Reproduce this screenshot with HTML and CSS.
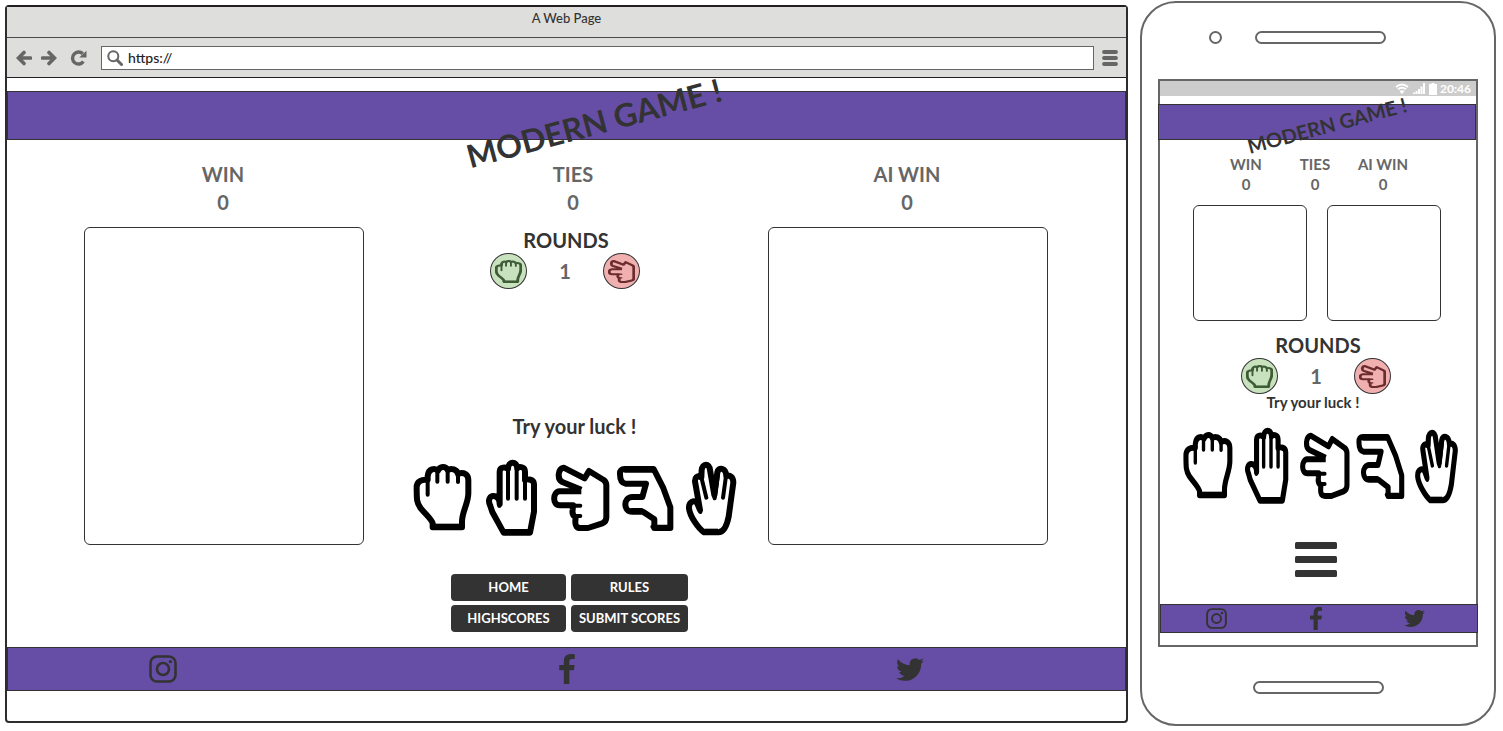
FILE: index.html
```html
<!DOCTYPE html>
<html lang="en">
<head>
<meta charset="utf-8">
<title>Modern Game</title>
<link rel="stylesheet" href="styles.css">
</head>
<body>
<svg class="defs" aria-hidden="true">
  <defs>
    <g id="rock" class="hand-lines">
      <path d="M98 382V370C95 358 82 348 62 325C50 308 50 300 50 262C50 243 65 238 83 240V228C85 205 105 203 114 212C120 198 137 198 143 210C153 203 172 208 174 222C190 215 205 222 205 240V280C205 310 186 335 186 365V382Z"/>
      <path class="thin" d="M83 228V284M112 212V245M143 210V245M174 222V246"/>
      <path d="M98 380H186"/>
    </g>
    <g id="paper" class="hand-lines">
      <path d="M311 398L277 336L270 315C262 298 272 286 282 288C295 290 299 305 299 312V215C299 200 318 200 324 207C324 182 351 182 352 205C358 198 375 200 375 215V240C382 236 402 238 402 252V335L390 398Z"/>
      <path class="thin" d="M298 290V318M324 207V296M350 205V296M375 215V296"/>
      <path d="M313 396H388"/>
    </g>
    <g id="scissors" class="hand-lines">
      <path d="M545 269L488 246C472 238 474 206 492 203L555 235L568 213L612 240Q620 246 620 256V352Q620 366 608 370L565 384H542Q526 384 527 364L528 352Q516 345 519 330L520 316H480C458 316 458 276 480 274H545"/>
      <path class="thin" d="M528 348H542M520 317H542"/>
    </g>
    <g id="lizard" class="hand-lines">
      <path d="M661 222Q660 207 675 207H762L790 262L812 322V384H764V358L730 335H698C670 335 670 292 698 291H728L739 251H678Q661 249 661 222Z"/>
      <path class="thin" d="M676 212H758M696 330H726M758 380H814" stroke-linecap="butt"/>
    </g>
    <g id="spock" class="hand-lines">
      <path d="M912 397C895 385 870 350 867 325C866 305 882 298 892 310L900 330L886 250C882 232 892 225 904 232L905 210C907 190 928 188 930 210L943 285L952 217C955 200 978 202 979 228C990 224 1000 232 1000 248L986 350C980 380 970 397 955 397Z"/>
      <path class="thin" d="M896 305L901 336M904 232L919 293M930 210L944 295L955 215M978 228L969 293"/>
      <path d="M914 395H954"/>
    </g>
    <g id="instagram">
      <rect x="1.5" y="1.5" width="25" height="25" rx="6.5" fill="none" stroke="currentColor" stroke-width="2.6"/>
      <circle cx="14" cy="14" r="6" fill="none" stroke="currentColor" stroke-width="2.6"/>
      <circle cx="21.4" cy="6.6" r="1.7" fill="currentColor"/>
    </g>
    <path id="facebook" fill="currentColor" d="M959 12v264H802q-86 0-116 36t-30 108v189h293l-39 296H656v759H350V905H95V609h255V391q0-186 104-288.5T731 0q147 0 228 12z"/>
    <path id="twitter" fill="currentColor" d="M1684 408q-67 98-162 167 1 14 1 42 0 130-38 259.500T1369.500 1125 1185 1335.500t-258 146-323 54.500q-271 0-496-145 35 4 78 4 225 0 401-138-105-2-188-64.500T285 1033q33 5 61 5 43 0 85-11-112-23-185.500-111.500T172 710v-4q68 38 146 41-66-44-105-115t-39-154q0-88 44-163 121 149 294.500 238.500T884 653q-8-38-8-74 0-134 94.500-228.500T1199 256q140 0 236 102 109-21 205-78-37 115-142 178 93-10 186-50z"/>
  </defs>
</svg>

<main class="showcase">
  <section class="browser">
    <div class="titlebar">A Web Page</div>
    <div class="toolbar">
      <button class="tool" aria-label="Back"><svg width="16" height="16" viewBox="0 0 16 16"><path d="M14.500 8H3M8 2.500L2.500 8L8 13.500" fill="none" stroke="currentColor" stroke-width="3.600" stroke-linecap="round"/></svg></button>
      <button class="tool" aria-label="Forward"><svg width="16" height="16" viewBox="0 0 16 16"><path d="M1.500 8H13M8 2.500L13.500 8L8 13.500" fill="none" stroke="currentColor" stroke-width="3.600" stroke-linecap="round"/></svg></button>
      <button class="tool reload" aria-label="Reload"><svg width="18" height="16" viewBox="0 0 18 16"><path d="M13.400 11.600A6 6 0 1 1 12.800 3.800" fill="none" stroke="currentColor" stroke-width="3.400"/><path d="M16.500 .8V7.600H9.200Z" fill="currentColor"/></svg></button>
      <label class="address">
        <svg width="16" height="16" viewBox="0 0 16 16"><circle cx="6.300" cy="6.300" r="5" fill="none" stroke="currentColor" stroke-width="2"/><path d="M10 10L14.500 14.500" stroke="currentColor" stroke-width="3" stroke-linecap="round"/></svg>
        <input type="text" value="https://" aria-label="Address">
      </label>
      <button class="tool" aria-label="Browser menu"><svg width="16" height="16" viewBox="0 0 16 16"><path d="M2 2H14M2 8H14M2 14H14" stroke="currentColor" stroke-width="3.800" stroke-linecap="round"/></svg></button>
    </div>

    <div class="page">
      <header class="band"><h1 class="title">MODERN GAME !</h1></header>
      <dl class="scores">
        <div><dt>WIN</dt><dd>0</dd></div>
        <div><dt>TIES</dt><dd>0</dd></div>
        <div><dt>AI WIN</dt><dd>0</dd></div>
      </dl>
      <div class="board">
        <div class="card"></div>
        <div class="middle">
          <div class="rounds">
            <h2>ROUNDS</h2>
            <div class="round-row">
              <span class="pick pick-green"><svg viewBox="42 193 171 199" preserveAspectRatio="none"><use href="#rock"/></svg></span>
              <span class="round-number">1</span>
              <span class="pick pick-red"><svg viewBox="456 194 172 198" preserveAspectRatio="none"><use href="#scissors"/></svg></span>
            </div>
          </div>
          <div class="play">
            <p class="prompt">Try your luck !</p>
            <div class="hands">
              <button class="hand" style="flex-grow:201" aria-label="Rock"><svg viewBox="36 174 201 240" preserveAspectRatio="none"><use href="#rock"/></svg></button>
              <button class="hand" style="flex-grow:196" aria-label="Paper"><svg viewBox="237 174 196 240" preserveAspectRatio="none"><use href="#paper"/></svg></button>
              <button class="hand" style="flex-grow:207" aria-label="Scissors"><svg viewBox="433 174 207 240" preserveAspectRatio="none"><use href="#scissors"/></svg></button>
              <button class="hand" style="flex-grow:200" aria-label="Lizard"><svg viewBox="640 174 200 240" preserveAspectRatio="none"><use href="#lizard"/></svg></button>
              <button class="hand" style="flex-grow:174" aria-label="Spock"><svg viewBox="840 174 174 240" preserveAspectRatio="none"><use href="#spock"/></svg></button>
            </div>
          </div>
        </div>
        <div class="card"></div>
      </div>
      <nav class="menu">
        <button>HOME</button>
        <button>RULES</button>
        <button>HIGHSCORES</button>
        <button>SUBMIT SCORES</button>
      </nav>
      <footer class="band social">
        <a href="#instagram" aria-label="Instagram"><svg class="ig" viewBox="0 0 28 28"><use href="#instagram"/></svg></a>
        <a href="#facebook" aria-label="Facebook"><svg class="fb" viewBox="95 0 864 1664"><use href="#facebook"/></svg></a>
        <a href="#twitter" aria-label="Twitter"><svg class="tw" viewBox="108 256 1576 1280"><use href="#twitter"/></svg></a>
      </footer>
    </div>
  </section>

  <section class="phone">
    <div class="phone-top"><span class="camera"></span><span class="bar"></span></div>
    <div class="screen">
      <div class="status">
        <svg width="14" height="11" viewBox="0 0 14 11"><path d="M1 4Q7 -1 13 4M3 6.300Q7 3 11 6.300" fill="none" stroke="currentColor" stroke-width="1.900"/><path d="M4.500 8.200Q7 6.300 9.500 8.200L7 11Z" fill="currentColor"/></svg>
        <svg width="14" height="11" viewBox="0 0 14 11"><path d="M2 11V9.500M4.500 11V8M7 11V6M9.500 11V3.500M12 11V0" stroke="currentColor" stroke-width="2"/></svg>
        <svg class="battery" width="8" height="12" viewBox="0 0 8 12"><path d="M2.500 0H5.500V1H8V12H0V1H2.500Z" fill="currentColor"/></svg>
        <span>20:46</span>
      </div>
      <header class="band"><h1 class="title">MODERN GAME !</h1></header>
      <dl class="scores">
        <div><dt>WIN</dt><dd>0</dd></div>
        <div><dt>TIES</dt><dd>0</dd></div>
        <div><dt>AI WIN</dt><dd>0</dd></div>
      </dl>
      <div class="cards"><div class="card"></div><div class="card"></div></div>
      <div class="rounds">
        <h2>ROUNDS</h2>
        <div class="round-row">
          <span class="pick pick-green"><svg viewBox="42 193 171 199" preserveAspectRatio="none"><use href="#rock"/></svg></span>
          <span class="round-number">1</span>
          <span class="pick pick-red"><svg viewBox="456 194 172 198" preserveAspectRatio="none"><use href="#scissors"/></svg></span>
        </div>
      </div>
      <p class="prompt">Try your luck !</p>
      <div class="hands">
        <button class="hand" style="flex-grow:201" aria-label="Rock"><svg viewBox="36 174 201 240" preserveAspectRatio="none"><use href="#rock"/></svg></button>
        <button class="hand" style="flex-grow:196" aria-label="Paper"><svg viewBox="237 174 196 240" preserveAspectRatio="none"><use href="#paper"/></svg></button>
        <button class="hand" style="flex-grow:207" aria-label="Scissors"><svg viewBox="433 174 207 240" preserveAspectRatio="none"><use href="#scissors"/></svg></button>
        <button class="hand" style="flex-grow:200" aria-label="Lizard"><svg viewBox="640 174 200 240" preserveAspectRatio="none"><use href="#lizard"/></svg></button>
        <button class="hand" style="flex-grow:174" aria-label="Spock"><svg viewBox="840 174 174 240" preserveAspectRatio="none"><use href="#spock"/></svg></button>
      </div>
      <button class="burger" aria-label="Menu"><svg width="42" height="35" viewBox="0 0 42 35"><g fill="currentColor"><rect width="42" height="7" rx="1.500"/><rect y="14" width="42" height="7" rx="1.500"/><rect y="28" width="42" height="7" rx="1.500"/></g></svg></button>
      <footer class="band social">
        <a href="#instagram" aria-label="Instagram"><svg class="ig" viewBox="0 0 28 28"><use href="#instagram"/></svg></a>
        <a href="#facebook" aria-label="Facebook"><svg class="fb" viewBox="95 0 864 1664"><use href="#facebook"/></svg></a>
        <a href="#twitter" aria-label="Twitter"><svg class="tw" viewBox="108 256 1576 1280"><use href="#twitter"/></svg></a>
      </footer>
    </div>
    <div class="phone-bottom"><span class="bar"></span></div>
  </section>
</main>
</body>
</html>
```
FILE: styles.css
```css
* { box-sizing: border-box; }

body {
  margin: 0;
  background: #fff;
  color: #333;
  font-family: Lato, "Open Sans", sans-serif;
}

h1, h2, p, dl, dd { margin: 0; }
svg { display: block; }
a { color: inherit; }

button {
  margin: 0;
  padding: 0;
  border: 0;
  background: none;
  color: inherit;
  font: inherit;
  cursor: pointer;
}

.defs { position: absolute; width: 0; height: 0; }

.showcase {
  display: grid;
  grid-template-columns: 1123fr 356fr;
  gap: 12px;
  align-items: start;
  padding: 1px 7px 4px 5px;
}

/* Browser window */
.browser {
  margin-top: 4px;
  border: 2px solid #2d2d2f;
  border-top-color: #231f20;
  border-radius: 4px;
}

.titlebar {
  height: 31px;
  border-bottom: 1px solid #4a4a4a;
  background: #dededc;
  font-size: 13px;
  font-weight: 500;
  line-height: 23px;
  text-align: center;
}

.toolbar {
  display: flex;
  align-items: center;
  height: 40px;
  padding: 0 8px 0 9px;
  border-bottom: 1px solid #231f20;
  background: #dededc;
  color: #666;
}

.tool + .tool { margin-left: 9px; }
.tool.reload { margin-left: 12px; }
.tool + .reload { margin-left: 13px; }

.address {
  display: flex;
  flex: 1;
  align-items: center;
  gap: 5px;
  height: 24px;
  margin: 0 8px 0 13px;
  padding: 0 5px;
  border: 1px solid #666;
  background: #fff;
}

.address input {
  flex: 1;
  min-width: 0;
  padding: 0;
  border: 0;
  outline: 0;
  background: none;
  color: #222;
  font: 500 14px/20px Lato, "Open Sans", sans-serif;
}

.page { padding: 13px 0 30px; }

.band {
  position: relative;
  height: 49px;
  border: 1px solid #333;
  background: #664ea6;
}

.title {
  position: absolute;
  top: 50%;
  left: 50%;
  z-index: 1;
  margin-left: 27px;
  transform: translate(-50%, -50%) translateY(7px) rotate(-15deg);
  font-size: 32px;
  line-height: 40px;
  white-space: nowrap;
}

.scores {
  display: grid;
  grid-template-columns: 350fr 350fr 318fr;
  padding: 20px 60px 0 41px;
  color: #666;
  font-size: 20px;
  font-weight: 700;
  line-height: 28px;
  text-align: center;
}

.board {
  display: grid;
  grid-template-columns: 280fr 404fr 280fr;
  min-height: 318px;
  margin: 11px 78px 0 77px;
}

.card {
  border: 1px solid #333;
  border-radius: 6px;
}

.middle {
  display: flex;
  flex-direction: column;
  justify-content: space-between;
}

.rounds { text-align: center; }

.rounds h2 {
  font-size: 20px;
  line-height: 26px;
}

.round-row {
  display: flex;
  justify-content: center;
  align-items: center;
  padding-right: 2px;
}

.round-number {
  width: 76px;
  color: #666;
  font-size: 20px;
  font-weight: 700;
}

.pick {
  display: grid;
  place-items: center;
  width: 37px;
  height: 36px;
  border: 1px solid #333;
  border-radius: 50%;
}

.pick svg { width: 27px; height: 23px; }
.pick-green { background: #c8e2bd; color: #3f5c38; }
.pick-red { background: #f0b0b0; color: #6c2c2e; }

.hand-lines {
  fill: none;
  stroke: currentColor;
  stroke-width: 18;
  stroke-linejoin: round;
}

.thin { stroke-width: 12; stroke-linecap: round; }

.play { padding: 0 0 7px 17px; }

.prompt {
  font-size: 20px;
  font-weight: 700;
  line-height: 28px;
  text-align: center;
}

.hands {
  display: flex;
  width: 326px;
  margin: 18px auto 0;
  color: #000;
}

.hand { flex: 1 1 0; min-width: 0; }
.hand svg { width: 100%; height: 80px; }

.menu {
  display: grid;
  grid-template-columns: 115px 117px;
  justify-content: center;
  gap: 4px 5px;
  padding: 29px 0 15px 6px;
}

.menu button {
  height: 27px;
  padding-bottom: 2px;
  border-radius: 4px;
  background: #333;
  color: #fff;
  font-size: 13px;
  font-weight: 700;
  line-height: 16px;
  white-space: nowrap;
}

.social {
  display: grid;
  grid-template-columns: 311fr 497fr 190fr;
  place-items: center;
  height: 44px;
  padding-right: 120px;
}

.ig { width: 28px; height: 28px; }
.fb { width: 16px; height: 30px; }
.tw { width: 28px; height: 23px; }

/* Phone */
.phone {
  border: 2px solid #666;
  border-radius: 36px;
}

.phone-top {
  display: flex;
  align-items: center;
  gap: 33px;
  height: 76px;
  padding: 0 0 8px 67px;
}

.camera {
  width: 13px;
  height: 13px;
  border: 2px solid #666;
  border-radius: 50%;
}

.bar {
  width: 131px;
  height: 13px;
  border: 2px solid #666;
  border-radius: 7px;
}

.phone-bottom {
  display: flex;
  justify-content: center;
  padding: 34px 0 30px;
}

.screen {
  display: flex;
  flex-direction: column;
  margin: 0 16px;
  padding-bottom: 12px;
  border: 2px solid #666;
}

.status {
  display: flex;
  justify-content: flex-end;
  align-items: center;
  gap: 3px;
  height: 15px;
  margin-bottom: 8px;
  padding-right: 5px;
  background: #ccc;
  color: #fff;
  font-size: 12px;
  font-weight: 700;
}

.phone .band { height: 36px; margin: 0 0 0 -2px; }

.phone .title {
  margin-left: 10px;
  transform: translate(-50%, -50%) translateY(3px) rotate(-15deg);
  font-size: 20px;
  line-height: 26px;
}

.phone .scores {
  grid-template-columns: 70fr 68fr 68fr;
  padding: 14px 59px 0 51px;
  font-size: 15px;
  line-height: 20px;
  white-space: nowrap;
}

.cards {
  display: grid;
  grid-template-columns: 1fr 1fr;
  gap: 20px;
  margin: 11px 35px 11px 33px;
}

.cards .card { height: 116px; }

.phone .round-row { padding-right: 4px; }

.phone .prompt {
  padding-right: 10px;
  font-size: 15px;
  line-height: 17px;
}

.phone .hands { width: 277px; margin: 15px auto 0 22px; }

.burger {
  align-self: center;
  margin: 36px 4px 27px 0;
}

.phone .social {
  grid-template-columns: 110fr 90fr 106fr;
  height: 29px;
  margin: 0 -2px 0 0;
  padding-right: 10px;
}

.phone .ig { width: 21px; height: 21px; }
.phone .fb { width: 12px; height: 23px; }
.phone .tw { width: 21px; height: 17px; }
```
